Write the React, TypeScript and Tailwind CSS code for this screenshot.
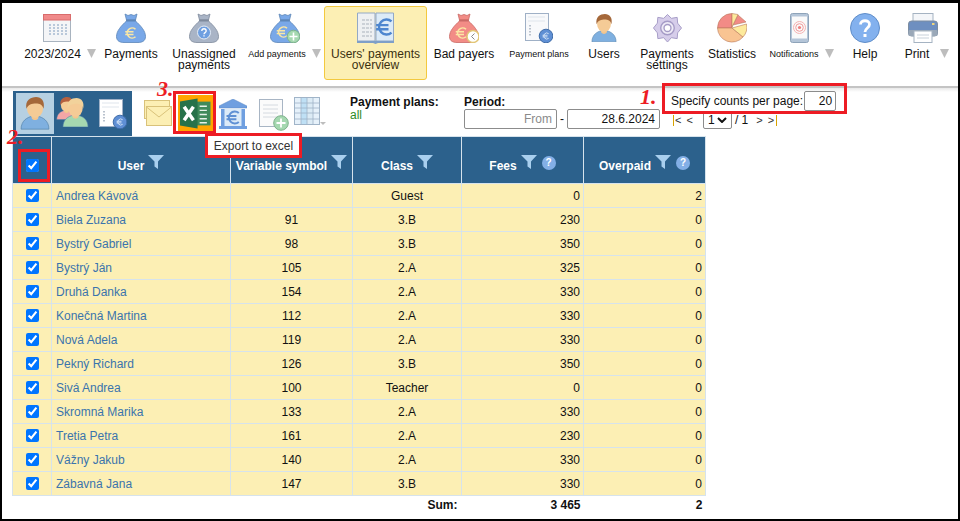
import type { ReactNode } from "react";

const Euro = ({ x, y, r = 5, color = "#fbe7a4", w = 1.6 }: { x: number; y: number; r?: number; color?: string; w?: number }) => (
  <path
    d={`M${x + r * 0.8} ${y - r * 0.75} A${r} ${r} 0 1 0 ${x + r * 0.8} ${y + r * 0.75} M${x - r * 1.25} ${y - r * 0.25} H${x + r * 0.4} M${x - r * 1.25} ${y + r * 0.3} H${x + r * 0.4}`}
    fill="none"
    stroke={color}
    strokeWidth={w}
  />
);

const Bag = ({ fill, dark, children }: { fill: string; dark: string; children?: ReactNode }) => (
  <svg viewBox="0 0 30 30" className="w-[30px] h-[30px]">
    <path d="M9 1 L12 2.5 L15 1.5 L18 2.5 L21 1 L19.5 7 H10.5 Z" fill={fill} stroke={dark} strokeWidth="0.8" />
    <path d="M11 7.5 C5 13 0.5 18 0.5 23.5 C0.5 28 4 29.5 8 29.5 H22 C26 29.5 29.5 28 29.5 23.5 C29.5 18 25 13 19 7.5 Z" fill={fill} stroke={dark} strokeWidth="0.8" />
    <rect x="10" y="6.5" width="10" height="2" rx="1" fill={dark} />
    {children}
  </svg>
);

const CalendarIcon = () => (
  <svg viewBox="0 0 28 28" className="w-[28px] h-[28px]">
    <rect x="0.5" y="0.5" width="27" height="27" fill="#f4f5f7" stroke="#a8b3bf" />
    <rect x="0.5" y="0.5" width="27" height="5.5" fill="#f08a8a" stroke="#d96c6c" />
    {[10, 13, 16, 19].map((y) =>
      [6, 10, 14, 18, 22].map((x) => <rect key={`${x}-${y}`} x={x} y={y} width="2" height="2" fill="#b9c8da" />)
    )}
  </svg>
);

const BookIcon = () => (
  <svg viewBox="0 0 37 32" className="w-[37px] h-[32px]">
    <path d="M0.5 1 H18 V29 H0.5 Z" fill="#eef0f2" stroke="#93a9c6" />
    <path d="M19 1 H36.5 V29 H19 Z" fill="#dcebf8" stroke="#93a9c6" />
    <path d="M0 29 H37 V31 H21 L18.5 32 L16 31 H0 Z" fill="#7f9fc8" />
    {[8, 12, 16, 20, 24].map((y) => (
      <path key={y} d={`M5 ${y} H15`} stroke="#a9b1bb" strokeWidth="1.2" strokeDasharray="3 1" />
    ))}
    <Euro x={28.5} y={15} r={7.5} color="#4d86cf" w={2.4} />
  </svg>
);

const PlanIcon = ({ light = false, w = 28 }: { light?: boolean; w?: number }) => (
  <svg viewBox="0 0 28 30" style={{ width: w, height: (w * 30) / 28 }}>
    <rect x="0.5" y="0.5" width="23" height="27" fill={light ? "#ffffff" : "#f8f9fb"} stroke="#9fb0c6" />
    <path d="M3 4 H20 M3 8 H20" stroke="#dfe5ec" />
    {[12, 15, 18, 21].map((y) => (
      <rect key={y} x="4" y={y} width="2" height="1.5" fill="#b9c2cd" />
    ))}
    <circle cx="21" cy="23" r="6.8" fill="#5f8fd4" stroke="#3f6ca8" />
    <Euro x={21.3} y={23} r={3} color="#cfe0f5" w={1} />
  </svg>
);

const PersonIcon = ({ size = 28, shirt = "#7fb0e0", hair = "#a5683a" }: { size?: number; shirt?: string; hair?: string }) => (
  <svg viewBox="0 0 28 30" style={{ width: size, height: (size * 30) / 28 }}>
    <path d="M1 30 C1 22 7 19 11 18 H17 C21 19 27 22 27 30 Z" fill={shirt} stroke="#4f7ea8" strokeWidth="0.6" />
    <path d="M11 14 H17 V20 C15.5 22 12.5 22 11 20 Z" fill="#f3c58d" />
    <ellipse cx="14" cy="10.5" rx="7.5" ry="9" fill="#f5cb96" />
    <path d="M6 11 C4.5 3 10 0 15 0 C20 0 23.5 4 22 11 C21 7 18 6 15 6 C11 6 7.5 7 6 11 Z" fill={hair} />
  </svg>
);

const GearIcon = () => (
  <svg viewBox="0 0 30 30" className="w-[29px] h-[30px]">
    <path
      d="M15 1 L19 5 L25 4 L25.5 10 L29.5 15 L25.5 20 L25 26 L19 25 L15 29.5 L11 25 L5 26 L4.5 20 L0.5 15 L4.5 10 L5 4 L11 5 Z"
      fill="#d6cdea"
      stroke="#a59bc6"
      strokeLinejoin="round"
    />
    <circle cx="15" cy="15" r="7" fill="#eeeaf6" stroke="#a59bc6" strokeWidth="1.4" />
    <circle cx="15" cy="15" r="3.6" fill="#ffffff" stroke="#a59bc6" strokeWidth="1.4" />
  </svg>
);

const PieIcon = () => (
  <svg viewBox="0 0 30 30" className="w-[30px] h-[30px]">
    <path d="M15 15 L15 0.5 A14.5 14.5 0 0 0 0.5 15 Z" fill="#f28b86" stroke="#b9795a" strokeWidth="0.6" />
    <path d="M15 15 L0.5 15 A14.5 14.5 0 0 0 26 24 Z" fill="#f9c492" stroke="#b9795a" strokeWidth="0.6" />
    <path d="M15 15 L26 24 A14.5 14.5 0 0 0 29.5 11 Z" fill="#fdea9c" stroke="#b9795a" strokeWidth="0.6" />
    <path d="M16 12 L21 2 L29 9 Z" fill="#f28b86" stroke="#b9795a" strokeWidth="0.6" />
    <path d="M15 14 L15 0.5 L21 1.5 Z" fill="#fdea9c" stroke="#b9795a" strokeWidth="0.6" />
  </svg>
);

const PhoneIcon = () => (
  <svg viewBox="0 0 19 30" className="w-[19px] h-[30px]">
    <rect x="0.5" y="0.5" width="18" height="29" rx="2" fill="#b4c5d8" stroke="#8ea3b9" />
    <rect x="2" y="3.5" width="15" height="22" fill="#fafafa" />
    <circle cx="9.5" cy="14.5" r="6" fill="none" stroke="#f5b3b3" />
    <circle cx="9.5" cy="14.5" r="3.8" fill="none" stroke="#f29a9a" />
    <circle cx="9.5" cy="14.5" r="1.6" fill="#ee7f7f" />
  </svg>
);

const HelpIcon = () => (
  <svg viewBox="0 0 30 30" className="w-[30px] h-[30px]">
    <circle cx="15" cy="15" r="14.5" fill="#83b1ee" stroke="#5f8dc8" />
    <path d="M10.5 11.5 C10.5 6.5 19.5 6.5 19.5 11.5 C19.5 15 15 15 15 19" fill="none" stroke="#fff" strokeWidth="2.8" />
    <rect x="13.5" y="21" width="3" height="3" fill="#fff" />
  </svg>
);

const PrintIcon = () => (
  <svg viewBox="0 0 30 30" className="w-[30px] h-[30px]">
    <rect x="5" y="0.5" width="20" height="10" fill="#f4f6f9" stroke="#a5b3c2" />
    <rect x="0.5" y="8" width="29" height="15" rx="3" fill="#6e8fc0" stroke="#7d8da0" />
    <rect x="0.5" y="17" width="29" height="6" rx="1" fill="#9aa8b8" />
    <rect x="24" y="10" width="2.5" height="2" fill="#f0d67a" />
    <rect x="6" y="18" width="18" height="11.5" fill="#fff" stroke="#a5b3c2" />
    <path d="M9 22 H21 M9 25 H21" stroke="#c8d1da" />
  </svg>
);

const Arrow = () => (
  <svg viewBox="0 0 9 9" className="w-[9px] h-[9px] shrink-0">
    <path d="M0 0 H9 L4.5 9 Z" fill="#bdbdbd" />
  </svg>
);

const navItems: { w: string; icon: ReactNode; label: ReactNode; small?: boolean; arrow?: boolean; iconShift?: string; active?: boolean; gap?: string }[] = [
  { w: "w-[80px] ml-[18px]", icon: <CalendarIcon />, label: "2023/2024", arrow: true, iconShift: "mr-[6px]" },
  {
    w: "w-[62px]",
    icon: (
      <Bag fill="#79a8e8" dark="#5d86b8">
        <Euro x={15.5} y={20} r={5} />
      </Bag>
    ),
    label: "Payments",
  },
  {
    w: "w-[84px]",
    icon: (
      <Bag fill="#a9b4c6" dark="#7f8a9c">
        <circle cx="15" cy="19.5" r="6.5" fill="#6f9fe0" stroke="#e4ecf6" />
        <path d="M12.8 18 C12.8 15 17.2 15 17.2 18 C17.2 19.6 15 19.6 15 21.2 M15 22.2 V23.4" fill="none" stroke="#fff" strokeWidth="1.3" />
      </Bag>
    ),
    label: (
      <>
        Unassigned
        <br />
        payments
      </>
    ),
  },
  {
    w: "w-[77px]",
    icon: (
      <Bag fill="#79a8e8" dark="#5d86b8">
        <Euro x={13} y={19} r={5} />
        <circle cx="23.5" cy="23.5" r="6.3" fill="#a5d8b0" stroke="#7fb38c" />
        <path d="M23.5 19.5 V27.5 M19.5 23.5 H27.5" stroke="#fff" strokeWidth="1.6" />
      </Bag>
    ),
    label: "Add payments",
    small: true,
    arrow: true,
  },
  {
    w: "w-[103px] ml-px",
    icon: <BookIcon />,
    label: (
      <>
        Users' payments
        <br />
        overview
      </>
    ),
    active: true,
  },
  {
    w: "w-[74px]",
    icon: (
      <Bag fill="#f28c86" dark="#c96a66">
        <Euro x={13} y={20} r={5} />
        <circle cx="24" cy="23.5" r="6" fill="#fff" stroke="#e2c676" strokeWidth="1.5" />
        <path d="M25.5 20.5 L22.5 23.5 L25.5 26.5" fill="none" stroke="#8a8a8a" strokeWidth="1" />
      </Bag>
    ),
    label: "Bad payers",
  },
  { w: "w-[76px]", icon: <PlanIcon />, label: "Payment plans", small: true },
  { w: "w-[54px]", icon: <PersonIcon size={26} />, label: "Users" },
  {
    w: "w-[72px]",
    icon: <GearIcon />,
    label: (
      <>
        Payments
        <br />
        settings
      </>
    ),
  },
  { w: "w-[58px]", icon: <PieIcon />, label: "Statistics" },
  { w: "w-[81px]", icon: <PhoneIcon />, label: "Notifications", small: true, arrow: true, iconShift: "mr-[5px]" },
  { w: "w-[46px]", icon: <HelpIcon />, label: "Help" },
  { w: "w-[78px]", icon: <PrintIcon />, label: "Print", arrow: true, iconShift: "mr-[9px]", gap: "gap-[11px]" },
];

const rows = [
  ["Andrea Kávová", "", "Guest", "0", "2"],
  ["Biela Zuzana", "91", "3.B", "230", "0"],
  ["Bystrý Gabriel", "98", "3.B", "350", "0"],
  ["Bystrý Ján", "105", "2.A", "325", "0"],
  ["Druhá Danka", "154", "2.A", "330", "0"],
  ["Konečná Martina", "112", "2.A", "330", "0"],
  ["Nová Adela", "119", "2.A", "330", "0"],
  ["Pekný Richard", "126", "3.B", "350", "0"],
  ["Sivá Andrea", "100", "Teacher", "0", "0"],
  ["Skromná Marika", "133", "2.A", "330", "0"],
  ["Tretia Petra", "161", "2.A", "230", "0"],
  ["Vážny Jakub", "140", "2.A", "330", "0"],
  ["Zábavná Jana", "147", "3.B", "330", "0"],
];

const Filter = () => (
  <svg viewBox="0 0 16 14" className="w-[16px] h-[14px] shrink-0 -mt-[7px]">
    <path d="M0 0 H16 L10 6.5 V14 L6.5 11.5 V6.5 Z" fill="#a9cfee" />
  </svg>
);

const Hint = () => (
  <span className="-mt-[6px] ml-px w-[14px] h-[14px] shrink-0 rounded-full bg-[#83afe6] text-white text-[10px] leading-[14px] text-center">
    ?
  </span>
);

const Mark = ({ className, children }: { className: string; children: ReactNode }) => (
  <span className={`absolute font-['Liberation_Serif',serif] font-bold italic text-[22px] leading-none text-[#ed1c24] ${className}`}>
    {children}
  </span>
);

const HeaderCell = ({ label, hint }: { label: string; hint?: boolean }) => (
  <th className="border border-[#d6e3ec] p-0 pt-[11px] font-bold text-white">
    <div className="flex items-center justify-center gap-[4px]">
      <span>{label}</span>
      <Filter />
      {hint && <Hint />}
    </div>
  </th>
);

export default function App() {
  return (
    <div className="relative w-[960px] h-[521px] overflow-hidden bg-white border-2 border-t-[3px] border-black text-[12px] text-[#111] font-['Liberation_Sans',Arial,sans-serif]">
      {/* top menu */}
      <nav className="flex h-[83px] items-start pt-[3px] border-b-0">
        {navItems.map((item, i) => (
          <div
            key={i}
            className={`${item.w} h-[74px] shrink-0 flex flex-col items-center pt-[6px] rounded-[3px] border ${
              item.active ? "bg-[#fcefb4] border-[#f3c93f] text-[#3a2f10]" : "border-transparent"
            }`}
          >
            <div className={`h-[30px] flex items-center justify-center ${item.iconShift ?? ""}`}>{item.icon}</div>
            <div className={`mt-[6px] flex items-start ${item.gap ?? "gap-[6px]"} text-center leading-[11px]`}>
              <span className={item.small ? "text-[9px] whitespace-nowrap" : "whitespace-nowrap"}>{item.label}</span>
              {item.arrow && <Arrow />}
            </div>
          </div>
        ))}
      </nav>
      <div className="h-[2px] bg-[#c4c4c4]" />
      <div className="h-[4px] -mb-[4px] bg-gradient-to-b from-[#e8e8e8] to-white" />

      {/* toolbar */}
      <div className="flex items-start h-[48px] pl-[11px]">
        <div className="mt-[3px] w-[119px] h-[45px] bg-[#2c618c] flex items-center pl-[3px]">
          <div className="w-[38px] h-[41px] bg-[#b6d0e2] flex items-center justify-center">
            <PersonIcon size={30} />
          </div>
          <div className="relative w-[40px] h-[41px] ml-[2px]">
            <div className="absolute left-0 top-[4px]">
              <PersonIcon size={21} shirt="#f4a6a6" hair="#b5603f" />
            </div>
            <div className="absolute left-[6px] top-[5px]">
              <PersonIcon size={27} shirt="#a5d8b0" hair="#f2d29b" />
            </div>
          </div>
          <div className="ml-[3px]">
            <PlanIcon light w={28} />
          </div>
        </div>

        <div className="flex items-start ml-[12px]">
          <svg viewBox="0 0 28 26" className="mt-[12px] w-[28px] h-[26px]">
            <rect x="0.5" y="0.5" width="25" height="18" fill="#fcefb4" stroke="#d9c27a" />
            <rect x="2.5" y="6.5" width="25" height="19" fill="#fcefb4" stroke="#d9c27a" />
            <path d="M2.5 7 L15 17 L27.5 7" fill="none" stroke="#d9c27a" />
          </svg>
          <div className="mt-[7px] ml-[6px] w-[35px] h-[36px] bg-[#ffa500] flex items-center justify-center">
            <svg viewBox="0 0 30 30" className="w-[31px] h-[31px]">
              <rect x="13" y="3.5" width="16.5" height="23" fill="#3f8a5b" />
              <path d="M19 8 H26 M19 12 H26 M19 16 H26 M19 20 H26 M19 24 H26" stroke="#e6f2ea" strokeWidth="1.4" />
              <path d="M0 3.5 L17 0.5 V29.5 L0 26.5 Z" fill="#27724a" />
              <path d="M4 8.5 L13 21.5 M13 8.5 L4 21.5" stroke="#fff" strokeWidth="3.4" />
            </svg>
          </div>
          <svg viewBox="0 0 28 30" className="mt-[11px] ml-[6px] w-[28px] h-[30px]">
            <path d="M14 0 L28 7 V9 H0 V7 Z" fill="#6f9fe0" stroke="#5c88c2" strokeWidth="0.5" />
            <rect x="2" y="10" width="24" height="17" fill="#dcebf8" />
            <rect x="2" y="10" width="3.5" height="17" fill="#6f9fe0" />
            <rect x="22.5" y="10" width="3.5" height="17" fill="#6f9fe0" />
            <rect x="0" y="27" width="28" height="3" fill="#6f9fe0" />
            <Euro x={15} y={18.5} r={6} color="#5e90d4" w={2} />
          </svg>
          <svg viewBox="0 0 30 32" className="mt-[11px] ml-[12px] w-[30px] h-[32px]">
            <rect x="0.5" y="0.5" width="23" height="27" fill="#fbfbfb" stroke="#a8b5c4" />
            {[6, 10, 14, 18].map((y) => (
              <path key={y} d={`M4 ${y} H19`} stroke="#d5dae0" />
            ))}
            <circle cx="22" cy="24" r="7.3" fill="#a5d8b0" stroke="#7fb38c" />
            <path d="M22 19.5 V28.5 M17.5 24 H26.5" stroke="#fff" strokeWidth="1.8" />
          </svg>
          <svg viewBox="0 0 32 32" className="mt-[9px] ml-[5px] w-[32px] h-[32px]">
            <rect x="0.5" y="0.5" width="25" height="27" fill="#e6f1fa" stroke="#a0b4c8" />
            <rect x="7" y="1" width="6" height="26" fill="#bfe0f5" />
            <rect x="13" y="1" width="6" height="26" fill="#dcebf5" />
            <path d="M0.5 6 H25.5 M0.5 11 H25.5 M0.5 16 H25.5 M0.5 22 H25.5 M7 0.5 V27.5 M13 0.5 V27.5 M19 0.5 V27.5" stroke="#9fb3c7" strokeWidth="0.8" />
            <path d="M26 25 H32 L29 28 Z" fill="#bdbdbd" />
          </svg>
        </div>

        <div className="ml-[24px] mt-[8px] w-[114px] leading-[13px]">
          <div className="font-bold">Payment plans:</div>
          <div className="text-[#2e8b23]">all</div>
        </div>

        <div className="mt-[8px] w-[207px]">
          <div className="font-bold leading-[13px]">Period:</div>
          <div className="flex items-center gap-[3px]">
            <div className="w-[93px] h-[20px] border border-[#8c8c8c] rounded-[2px] text-right pr-[4px] leading-[18px] text-[#8a8a8a]">From</div>
            <span>-</span>
            <div className="w-[93px] h-[20px] border border-[#8c8c8c] rounded-[2px] text-right pr-[4px] leading-[18px]">28.6.2024</div>
          </div>
        </div>

        <div className="mt-[3px]">
          <div className="flex items-center h-[20px]">
            <span>Specify counts per page:</span>
            <div className="ml-px w-[32px] h-[20px] border border-[#8c8c8c] rounded-[2px] text-right pr-[3px] leading-[18px]">20</div>
          </div>
          <div className="flex items-center h-[18px] text-[11px] ml-[2px]">
            <span className="text-[#333] border-l border-[#d9a300] pl-px leading-[11px] tracking-[1px]">&lt; &lt;</span>
            <div className="ml-[9px] w-[29px] h-[18px] border border-[#8c8c8c] rounded-[2px] flex items-center pl-[4px] gap-[2px] text-[12px]">
              <span>1</span>
              <svg viewBox="0 0 10 6" className="w-[10px] h-[6px]">
                <path d="M1 1 L5 5 L9 1" fill="none" stroke="#111" strokeWidth="2" />
              </svg>
            </div>
            <span className="ml-[3px] text-[12px]">/ 1</span>
            <span className="ml-[8px] text-[#333] border-r border-[#d9a300] pr-px leading-[11px] tracking-[1px]">&gt; &gt;</span>
          </div>
        </div>
      </div>

      {/* table */}
      <table className="ml-[10px] w-[694px] table-fixed border-collapse">
        <colgroup>
          <col className="w-[39px]" />
          <col className="w-[179px]" />
          <col className="w-[122px]" />
          <col className="w-[109px]" />
          <col className="w-[122px]" />
          <col className="w-[122px]" />
        </colgroup>
        <thead>
          <tr className="h-[47px] bg-[#2c618c]">
            <th className="border border-[#d6e3ec] p-0 pt-[10px]">
              <input type="checkbox" defaultChecked readOnly className="block mx-auto w-[13px] h-[13px]" />
            </th>
            <HeaderCell label="User" />
            <HeaderCell label="Variable symbol" />
            <HeaderCell label="Class" />
            <HeaderCell label="Fees" hint />
            <HeaderCell label="Overpaid" hint />
          </tr>
        </thead>
        <tbody>
          {rows.map((r) => (
            <tr key={r[0]} className="h-[24px] bg-[#fcefb4]">
              <td className="border border-[#d6e3ec] p-0">
                <input type="checkbox" defaultChecked readOnly className="block mx-auto w-[13px] h-[13px]" />
              </td>
              <td className="border border-[#d6e3ec] p-0 pl-[4px] text-[#3a74ad]">{r[0]}</td>
              <td className="border border-[#d6e3ec] p-0 text-center">{r[1]}</td>
              <td className="border border-[#d6e3ec] p-0 text-center">{r[2]}</td>
              <td className="border border-[#d6e3ec] p-0 pr-[3px] text-right">{r[3]}</td>
              <td className="border border-[#d6e3ec] p-0 pr-[3px] text-right">{r[4]}</td>
            </tr>
          ))}
          <tr className="h-[18px] font-bold">
            <td colSpan={3} />
            <td className="pr-[4px] text-right">Sum:</td>
            <td className="pr-[3px] text-right">3 465</td>
            <td className="pr-[3px] text-right">2</td>
          </tr>
        </tbody>
      </table>

      {/* annotations */}
      <div className="absolute left-[660px] top-[80px] w-[185px] h-[31px] border-[3px] border-[#ed1c24]" />
      <div className="absolute left-[16px] top-[146px] w-[32px] h-[33px] border-[3px] border-[#ed1c24]" />
      <div className="absolute left-[171px] top-[88px] w-[43px] h-[43px] border-[3px] border-[#ed1c24]" />
      <div className="absolute left-[203px] top-[130px] w-[97px] h-[25px] border-[3px] border-[#ed1c24] bg-white flex items-center justify-center text-[#333]">
        Export to excel
      </div>
      <Mark className="left-[638px] top-[83px]">1.</Mark>
      <Mark className="left-[5px] top-[123px]">2.</Mark>
      <Mark className="left-[155px] top-[75px]">3.</Mark>
    </div>
  );
}
